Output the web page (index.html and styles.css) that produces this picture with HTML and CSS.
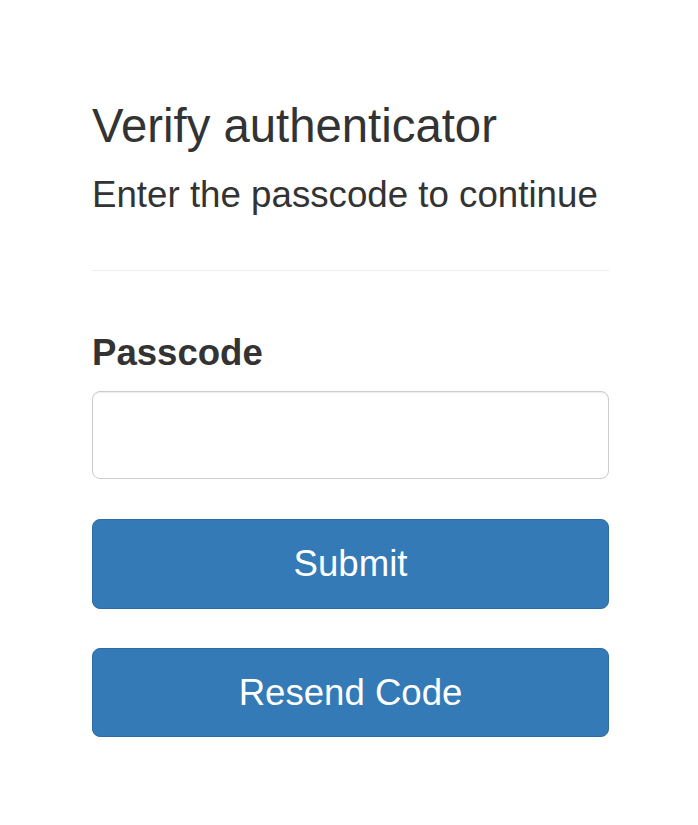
FILE: index.html
```html
<!DOCTYPE html>
<html>
<head>
<meta charset="utf-8">
<link rel="stylesheet" href="styles.css">
</head>
<body>
<main class="card">
  <h1 class="title">Verify authenticator</h1>
  <p class="subtitle">Enter the passcode to continue</p>
  <hr class="divider">
  <form class="form">
    <label class="label" for="passcode">Passcode</label>
    <input class="input" id="passcode" type="text">
    <button class="btn" type="button">Submit</button>
    <button class="btn btn-second" type="button">Resend Code</button>
  </form>
</main>
</body>
</html>
```
FILE: styles.css
```css
html, body {
  margin: 0;
  padding: 0;
  background: #fff;
}
body {
  font-family: "Liberation Sans", Arial, sans-serif;
  color: #333;
}
.card {
  width: 517px;
  margin-left: 92px;
  padding-top: 101px;
  display: flex;
  flex-direction: column;
}
.title {
  margin: 0;
  font-size: 47.3px;
  line-height: 50px;
  font-weight: 400;
}
.subtitle {
  margin: 24px 0 0;
  font-size: 36.7px;
  line-height: 40px;
}
.divider {
  margin: 55px 0 0;
  border: 0;
  border-top: 1px solid #eee;
  height: 0;
}
.form {
  display: flex;
  flex-direction: column;
}
.label {
  margin-top: 62px;
  font-size: 36.6px;
  line-height: 40px;
  font-weight: 700;
}
.input {
  margin-top: 18px;
  height: 88px;
  box-sizing: border-box;
  border: 1px solid #ccc;
  border-radius: 8px;
  box-shadow: inset 0 1px 1px rgba(0,0,0,.075);
  font: inherit;
  padding: 0 24px;
}
.btn {
  margin-top: 40px;
  height: 90px;
  border: 1px solid #2e6da4;
  border-radius: 8px;
  background: #337ab7;
  color: #fff;
  font-family: "Liberation Sans", Arial, sans-serif;
  font-size: 36.6px;
  padding: 0;
}
.btn-second {
  margin-top: 39px;
  height: 89px;
}
```
